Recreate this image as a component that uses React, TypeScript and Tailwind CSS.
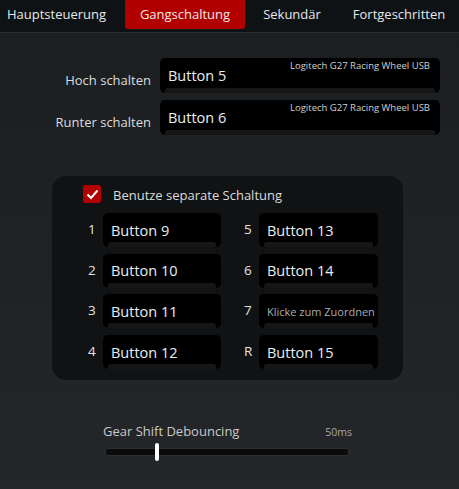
import React from "react";

const tabs = [
  { label: "Hauptsteuerung", w: "w-[113px]", active: false },
  { label: "Gangschaltung", w: "w-[120px] ml-[12px]", active: true },
  { label: "Sekundär", w: "w-[94px]", active: false },
  { label: "Fortgeschritten", w: "w-[120px]", active: false },
];

const gears = [
  ["1", "Button 9", "5", "Button 13"],
  ["2", "Button 10", "6", "Button 14"],
  ["3", "Button 11", "7", ""],
  ["4", "Button 12", "R", "Button 15"],
];

// schwarze Eingabebox mit dem helleren Streifen unten
function BindBox({
  value,
  device,
  className,
}: {
  value: string;
  device?: string;
  className: string;
}) {
  return (
    <div className={`relative rounded-[5px] bg-black flex items-center ${className}`}>
      {device && (
        <span className="absolute right-[10px] top-[2px] text-[9.5px] leading-[12px] text-[#d0d0d0]">
          {device}
        </span>
      )}
      {value ? (
        <span className="pl-[8px] pt-[2px] text-[14.5px] leading-none text-[#e8eef4]">{value}</span>
      ) : (
        <span className="pl-[8px] pt-[1px] text-[11px] leading-none text-[#a9aeb2]">Klicke zum Zuordnen</span>
      )}
      <div className="absolute bottom-0 left-[5px] right-[5px] h-[5px] rounded-t-[3px] bg-[#161616]" />
    </div>
  );
}

export default function App() {
  return (
    <div
      className="w-[459px] h-[489px] bg-gradient-to-b from-[#1b1e21] to-[#242629] text-[#e2e2e2] overflow-hidden"
      style={{ fontFamily: '"Open Sans", "Noto Sans", sans-serif' }}
    >
      {/* Tabs */}
      <div className="flex h-[33px] bg-[#0f1215] border-b border-[#2b2e31]">
        {tabs.map((t) => (
          <div
            key={t.label}
            className={`${t.w} h-[29px] flex items-center justify-center text-[13px] ${
              t.active ? "bg-[#b00000] rounded-b-[3px] text-[#f0e6e6]" : "text-[#e6e8ea]"
            }`}
          >
            {t.label}
          </div>
        ))}
      </div>

      {/* Hoch / Runter */}
      <div className="pt-[25px] flex flex-col gap-[7px]">
        {[
          ["Hoch schalten", "Button 5"],
          ["Runter schalten", "Button 6"],
        ].map(([label, val]) => (
          <div key={label} className="flex items-center">
            <div className="w-[151px] text-right text-[13px] pt-[10px] text-[#dcdcdc]">{label}</div>
            <BindBox
              value={val}
              device="Logitech G27 Racing Wheel USB"
              className="ml-[9px] w-[280px] h-[35px]"
            />
          </div>
        ))}
      </div>

      {/* Separate Schaltung */}
      <div className="mt-[41px] ml-[52px] w-[351px] h-[204px] rounded-[14px] bg-[#111213] pt-[9px]">
        <div className="flex items-center ml-[31px] h-[18px]">
          <div className="w-[18px] h-[18px] rounded-[2px] bg-[#b00000] flex items-center justify-center">
            <svg width="13" height="11" viewBox="0 0 13 11" fill="none">
              <path d="M1.5 5.5 L5 9 L11.5 1.5" stroke="white" strokeWidth="2" />
            </svg>
          </div>
          <span className="ml-[12px] text-[13px] pt-[3px] text-[#dcdcdc]">Benutze separate Schaltung</span>
        </div>

        <div className="ml-[36px] mt-[10px] flex flex-col gap-[6.7px]">
          {gears.map(([n1, v1, n2, v2]) => (
            <div key={n1} className="flex">
              <div className="flex items-center w-[133px]">
                <span className="w-[15px] text-[13.5px] -mt-[2px] text-[#e4e4e4]">{n1}</span>
                <BindBox value={v1} className="w-[118px] h-[34px]" />
              </div>
              <div className="flex items-center ml-[23px]">
                <span className="w-[15px] text-[13.5px] -mt-[2px] text-[#e4e4e4]">{n2}</span>
                <BindBox value={v2} className="w-[119px] h-[34px]" />
              </div>
            </div>
          ))}
        </div>
      </div>

      {/* Slider */}
      <div className="ml-[103px] w-[246px] mt-[42px]">
        <div className="flex items-end justify-between">
          <span className="text-[13px] text-[#c9c9c9]">Gear Shift Debouncing</span>
          <span className="text-[10.5px] text-[#a8a8a8] pb-[1px] mr-[-3px]">50ms</span>
        </div>
        <div className="relative mt-[6px] ml-[2px] h-[8px] rounded-[3px] bg-[#0b0b0b] border border-[#2c2e30]">
          <div className="absolute left-[49px] top-[-6px] w-[4px] h-[18px] rounded-[2px] bg-white" />
        </div>
      </div>
    </div>
  );
}
